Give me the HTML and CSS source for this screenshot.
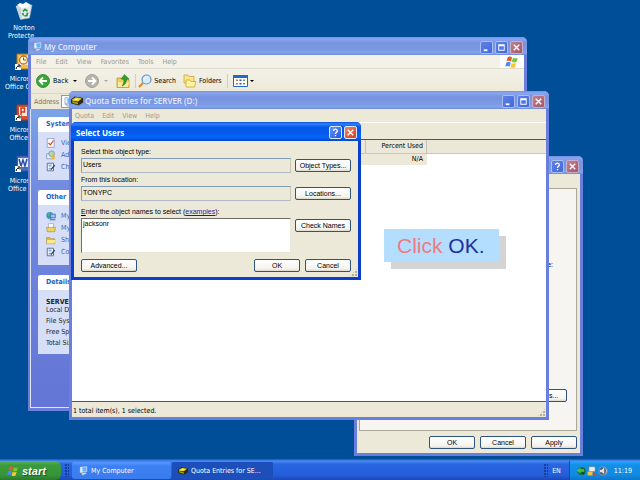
FILE: index.html
```html
<!doctype html>
<html lang="en">
<head>
  <meta charset="utf-8" />
  <meta name="viewport" content="width=device-width, initial-scale=1"/>
  <title>Disk quota demo</title>
  <link rel="stylesheet" href="styles.css">
</head>
<body>
  <svg width="0" height="0" class="defs" aria-hidden="true">
    <symbol id="flag" viewBox="0 0 16 16">
      <path fill="#f0562b" d="M3 2.500c2-1.200 3.500-1 5 0L6.800 7.300c-1.500-1-3.200-1-5 0z"/>
      <path fill="#7cc52f" d="M9 3c2 1 3.500 1 5.500 0l-1.300 4.800c-2 1-3.600 1-5.300 0z"/>
      <path fill="#4a8df0" d="M1.500 8.500c2-1 3.500-1 5 0l-1.200 4.800c-1.600-1-3.200-1-5 0z"/>
      <path fill="#fbc52c" d="M7.500 9c2 1 3.500 1 5.300 0l-1.300 4.900c-2 1-3.600 1-5.300 0z"/>
    </symbol>
    <symbol id="pc" viewBox="0 0 16 16">
      <path fill="#e9eef8" stroke="#4e74b8" stroke-width=".7" d="M3 1h5v10H3z"/>
      <path fill="#63b4f5" stroke="#e8f4ff" d="M6 2l8-1v8l-7 1z"/>
      <path fill="#d5dbe8" stroke="#56719f" stroke-width=".7" d="M4 12l8-2 2 2-6 3z"/>
    </symbol>
    <symbol id="disk" viewBox="0 0 16 16">
      <path fill="#2b2b12" d="M0 6l5-4 11 2v6l-6 4-10-3z"/>
      <path fill="#e5d533" d="M1.500 6l5-3 8 1.500-5 4L2 7.500z"/>
      <path fill="#a8a017" d="M1.500 8l8 2v2.500L2 10.500z"/>
      <path fill="#fffbc0" d="M5 5.500l3-1 2 .5-3 1.500z"/>
    </symbol>
    <symbol id="folder" viewBox="0 0 16 16">
      <path fill="#e8b83a" stroke="#a37b1c" stroke-width=".8" d="M1 4h5l1.500 2H14v8H1z"/>
      <path fill="#fde88c" d="M2 8h13l-1.500 5.500H1.500z"/>
    </symbol>
    <symbol id="panel" viewBox="0 0 16 16">
      <path fill="#fff" stroke="#44597e" stroke-width="1.300" d="M2 2h10v12H2z"/>
      <path fill="#86aee8" d="M4 4h5v3H4zM4 9h4v3H4z"/>
      <path stroke="#26406d" stroke-width="2" d="M14 5l-6 7"/>
    </symbol>
    <symbol id="shortcut" viewBox="0 0 6 6">
      <path fill="#fff" d="M0 0h6v6H0z"/>
      <path fill="none" stroke="#000" d="M1.200 5c0-2 1-2.800 3-2.800M2.800 1H5v2.500"/>
    </symbol>
    <symbol id="min" viewBox="0 0 12 12"><path fill="#fff" d="M3 8h4v2H3z"/></symbol>
    <symbol id="max" viewBox="0 0 12 12"><path fill="#fff" fill-rule="evenodd" d="M2.500 2.500h7v7h-7zM3.500 4.500v4h5v-4z"/></symbol>
    <symbol id="close" viewBox="0 0 12 12"><path stroke="#fff" stroke-width="1.500" d="M3 3l6 6M9 3l-6 6"/></symbol>
    <symbol id="help" viewBox="0 0 12 12"><path fill="none" stroke="#fff" stroke-width="1.500" d="M4 4.300c0-2.700 4-2.500 4 0 0 1.400-2 1.400-2 3.200M6 8.600v1.500"/></symbol>
  </svg>

  <main class="desktop">
    <nav class="shortcuts" aria-label="Desktop">
      <a href="#" class="shortcut">
        <svg viewBox="0 0 18 18"><path fill="#e4ebef" stroke="#9fb0ba" stroke-width=".6" d="M1 4l16-1-2.500 13-9 1.500z"/><path fill="#fff" d="M2 3l3-2 3 1 3-2 5 3-4 2.500-6 .5z"/><path fill="#c7d3da" d="M1 4l5 1.500L6.500 17l-1.500-.5z"/><path fill="none" stroke="#21983c" stroke-width="1.700" d="M8 9.500l2-2.200 2.500 1.800M12.600 10.500l-.7 3-2.500.5M8.600 13.500L7.500 11"/></svg>
        <span>Norton<br>Protecte...</span>
      </a>
      <a href="#" class="shortcut">
        <svg viewBox="0 0 18 18"><path fill="#f5bd4f" stroke="#b46f14" d="M2 1h14v15H2z"/><path fill="#fbe4a8" d="M4 3h10v9H4z"/><circle cx="8.500" cy="7" r="4" fill="#fff6dd" stroke="#b9741a" stroke-width="1.300"/><path fill="none" stroke="#8b5210" d="M8.500 4.500V7H11"/><use href="#shortcut" x="0" y="11" width="6" height="6"/></svg>
        <span>Microsoft<br>Office Out...</span>
      </a>
      <a href="#" class="shortcut">
        <svg viewBox="0 0 18 18"><path fill="#d9502f" stroke="#a33a20" d="M2 1h14v15H2z"/><path fill="#fde7de" d="M4 3h8v9H4z"/><path fill="none" stroke="#c63f22" stroke-width="1.500" d="M6 12V4h3.500v4H6"/><path stroke="#fff" d="M13 5h2M13 8h2"/><use href="#shortcut" x="0" y="11" width="6" height="6"/></svg>
        <span>Microsoft<br>Office P...</span>
      </a>
      <a href="#" class="shortcut">
        <svg viewBox="0 0 18 18"><path fill="#4b6fc8" stroke="#2f4f9f" d="M2 1h14v15H2z"/><path fill="#e6edfb" d="M3 3h10v9H3z"/><path fill="none" stroke="#2a4da5" stroke-width="1.500" d="M4 4l2 7 2-6 2 6 2-7"/><path stroke="#fff" d="M14 5h1M14 8h1"/><use href="#shortcut" x="0" y="11" width="6" height="6"/></svg>
        <span>Microsoft<br>Office W...</span>
      </a>
    </nav>

    <section class="window computer" aria-label="My Computer">
      <header class="title">
        <svg class="i10"><use href="#pc"/></svg>
        <h2>My Computer</h2>
        <button class="ctl" aria-label="Minimize"><svg><use href="#min"/></svg></button>
        <button class="ctl" aria-label="Maximize"><svg><use href="#max"/></svg></button>
        <button class="ctl close" aria-label="Close"><svg><use href="#close"/></svg></button>
      </header>
      <div class="menurow">
        <nav class="menu">
          <button>File</button><button>Edit</button><button>View</button><button>Favorites</button><button>Tools</button><button>Help</button>
        </nav>
        <div class="throbber"><svg class="i14"><use href="#flag"/></svg></div>
      </div>
      <div class="toolbar">
        <button class="tool back">
          <svg class="i14" viewBox="0 0 14 14"><circle cx="7" cy="7" r="6.500" fill="#39a735" stroke="#2a7d2a" stroke-width=".8"/><path fill="none" stroke="#fff" stroke-width="1.800" d="M11 7H4M7 3.500L3.500 7 7 10.500"/></svg>
          Back <i class="caret"></i>
        </button>
        <button class="tool forward" aria-label="Forward">
          <svg class="i14" viewBox="0 0 14 14"><circle cx="7" cy="7" r="6.500" fill="#b5b5ad" stroke="#94948d" stroke-width=".8"/><path fill="none" stroke="#fff" stroke-width="1.800" d="M3 7h7M7 3.500L10.500 7 7 10.500"/></svg>
          <i class="caret pale"></i>
        </button>
        <button class="tool up" aria-label="Up">
          <svg class="i14" viewBox="0 0 14 14"><path fill="#f3cd57" stroke="#b48c22" stroke-width=".7" d="M1 4h4l1 1.500h7v8H1z"/><path fill="#fdeb9c" d="M2 8h11l-1 5H2z"/><path fill="#33a02c" stroke="#1c7418" stroke-width=".5" d="M8.500.5L13 5h-2.500c0 3.500-1 5.500-4.500 7 1.500-2 2-4 2-7H5z"/></svg>
        </button>
        <button class="tool">
          <svg class="i14" viewBox="0 0 14 14"><path stroke="#d98b2b" stroke-width="2.200" d="M1 13l4-4"/><circle cx="8.500" cy="5.500" r="4.500" fill="#d6ecfb" stroke="#5f96cf" stroke-width="1.200"/><path fill="none" stroke="#fff" d="M6 5.500c0-1.500 1-2.500 2.500-2.500"/></svg>
          Search
        </button>
        <button class="tool folders">
          <svg class="i14" viewBox="0 0 14 14"><path fill="#fbe68a" stroke="#cda42f" stroke-width=".8" d="M1 1h4l1 1.500h5V9H1z"/><path fill="#fff3a8" stroke="#cda42f" stroke-width=".8" d="M3 6h4l1 1.500h5L11.500 13H3z"/></svg>
          Folders
        </button>
        <button class="tool views" aria-label="Views">
          <svg class="i15" viewBox="0 0 15 12"><path fill="#fff" stroke="#2568c4" d="M.5.5h14v11H.5z"/><path fill="#2568c4" d="M0 0h15v3H0z"/><path fill="#d76b4e" d="M3 4.500h2V6H3zM3 8h2v1.500H3z"/><path fill="#314fa8" d="M6.500 4.500h2V6h-2zM6.500 8h2v1.500h-2z"/><path fill="#54a154" d="M10 4.500h2V6h-2zM10 8h2v1.500h-2z"/></svg>
          <i class="caret"></i>
        </button>
      </div>
      <div class="address">
        <span>Address</span>
        <div class="addressbox"><svg class="i10"><use href="#pc"/></svg></div>
      </div>
      <div class="pane">
        <aside class="tasks">
          <section class="card">
            <h3>System Tasks</h3>
            <ul>
              <li><svg class="i10" viewBox="0 0 16 16"><path fill="#fff" stroke="#6b7fa8" d="M2 1h11v14H2z"/><path fill="none" stroke="#d0452c" stroke-width="2" d="M4 8l3 3 5-7"/></svg><a href="#">View</a></li>
              <li><svg class="i10" viewBox="0 0 16 16"><path fill="#e8edf7" stroke="#6b7fa8" d="M1 6h10v8H1z"/><circle cx="9" cy="6" r="4.500" fill="#b8d6ac" stroke="#5f7d9d"/><path fill="#e3ba45" d="M9 9h5v6H9z"/></svg><a href="#">Add</a></li>
              <li><svg class="i10"><use href="#panel"/></svg><a href="#">Change</a></li>
            </ul>
          </section>
          <section class="card">
            <h3>Other Places</h3>
            <ul>
              <li><svg class="i10" viewBox="0 0 16 16"><circle cx="6" cy="7" r="5.500" fill="#3792ce"/><path fill="#63b35b" d="M2 4l4-2 1 4-3 3z"/><path fill="#8cc6f2" stroke="#31589d" d="M7 5h8v6H7z"/><path fill="#667da6" d="M6 13h9v2H6z"/></svg><a href="#">My</a></li>
              <li><svg class="i10" viewBox="0 0 16 16"><path fill="#fff" stroke="#8d9bb5" d="M4 1h8v9H4z"/><path fill="#f2d261" stroke="#a98a2e" d="M1 7h14l-1 7H2z"/></svg><a href="#">My</a></li>
              <li><svg class="i10"><use href="#folder"/></svg><a href="#">Shared</a></li>
              <li><svg class="i10"><use href="#panel"/></svg><a href="#">Control</a></li>
            </ul>
          </section>
          <section class="card">
            <h3>Details</h3>
            <div class="details">
              <p><b>SERVER (D:)</b><br>Local Disk</p>
              <p>File System</p>
              <p>Free Space</p>
              <p>Total Size</p>
            </div>
          </section>
        </aside>
      </div>
    </section>

    <section class="window properties" aria-label="Properties">
      <header class="title">
        <h2></h2>
        <button class="ctl" aria-label="Help"><svg><use href="#help"/></svg></button>
        <button class="ctl close" aria-label="Close"><svg><use href="#close"/></svg></button>
      </header>
      <div class="sheet">
        <div class="tabpage">
          <p>for new users on this volume:</p>
          <button class="btn">Quota Entries...</button>
        </div>
        <div class="actions">
          <button class="btn">OK</button>
          <button class="btn">Cancel</button>
          <button class="btn">Apply</button>
        </div>
      </div>
    </section>

    <section class="window quota" aria-label="Quota Entries">
      <header class="title">
        <svg class="i12"><use href="#disk"/></svg>
        <h2>Quota Entries for SERVER (D:)</h2>
        <button class="ctl" aria-label="Minimize"><svg><use href="#min"/></svg></button>
        <button class="ctl" aria-label="Maximize"><svg><use href="#max"/></svg></button>
        <button class="ctl close" aria-label="Close"><svg><use href="#close"/></svg></button>
      </header>
      <nav class="menu">
        <button>Quota</button><button>Edit</button><button>View</button><button>Help</button>
      </nav>
      <div class="strip"></div>
      <div class="list">
        <table>
          <thead><tr><th class="wide"></th><th class="used">Percent Used</th><th></th></tr></thead>
          <tbody><tr><td class="sel"></td><td class="sel">N/A</td><td></td></tr></tbody>
        </table>
      </div>
      <footer class="status">1 total item(s), 1 selected.<span class="grip"></span></footer>
    </section>

    <form class="window active select" aria-label="Select Users">
      <header class="title">
        <h2>Select Users</h2>
        <button type="button" class="ctl" aria-label="Help"><svg><use href="#help"/></svg></button>
        <button type="button" class="ctl close" aria-label="Close"><svg><use href="#close"/></svg></button>
      </header>
      <div class="dialog">
        <div class="field">
          <label for="type">Select this object type:</label>
          <input id="type" type="text" value="Users" readonly>
          <button type="button" class="btn">Object Types...</button>
        </div>
        <div class="field">
          <label for="location">From this location:</label>
          <input id="location" type="text" value="TONYPC" readonly>
          <button type="button" class="btn">Locations...</button>
        </div>
        <div class="field names">
          <label for="names"><u>E</u>nter the object names to select (<a href="#">examples</a>):</label>
          <textarea id="names" spellcheck="false">jacksonr</textarea>
          <button type="button" class="btn">Check Names</button>
        </div>
        <div class="actions">
          <button type="button" class="btn advanced">Advanced...</button>
          <button type="button" class="btn">OK</button>
          <button type="button" class="btn">Cancel</button>
        </div>
        <span class="grip"></span>
      </div>
    </form>

    <div class="callout"><em>Click</em> OK.</div>
  </main>

  <footer class="taskbar">
    <button class="start"><svg class="i12"><use href="#flag"/></svg>start</button>
    <span class="dots"></span>
    <button class="task"><svg class="i10"><use href="#pc"/></svg>My Computer</button>
    <button class="task on"><svg class="i10"><use href="#disk"/></svg>Quota Entries for SE...</button>
    <span class="lang"><span class="dots"></span>EN</span>
    <div class="tray">
      <svg class="i10" viewBox="0 0 16 16"><circle cx="9" cy="8" r="6.500" fill="#1b6a3c"/><path fill="#49c04d" d="M1 7l6-5v3h6v4H7v3z"/><path fill="#0c2f4c" d="M10 10l4 1-3 3z"/></svg>
      <svg class="i10" viewBox="0 0 16 16"><path fill="#e9edf4" stroke="#65758c" d="M3 1h10v8H3z"/><path fill="#e9c647" d="M1 9h8v6H1z"/><path fill="#c64c31" d="M9 11h6v4H9z"/></svg>
      <svg class="i10" viewBox="0 0 16 16"><circle cx="8" cy="8" r="6.500" fill="#4c5664" stroke="#a8b4c2"/><path fill="#dce2e8" d="M3 6h3l4-4v11L6 10H3z"/><path fill="none" stroke="#fff" d="M12 4c2 3 2 5 0 8"/></svg>
      <time>11:19</time>
    </div>
  </footer>
</body>
</html>
```
FILE: styles.css
```css
:root{ --face:#ece9d8; --desk:#004e98; --edge:#6a7edb; --ui:"DejaVu Sans Condensed","DejaVu Sans",sans-serif; --dlg:"Liberation Sans",Arial,sans-serif; }
*,*::before,*::after{box-sizing:border-box}
body{margin:0;min-height:100vh;display:flex;flex-direction:column;background:var(--desk);font:7px/8px var(--ui);color:#000;overflow:hidden}
button,input,textarea{font:inherit;color:inherit;margin:0;padding:0;border:0;background:none;border-radius:0;outline:none}
h2,h3,p,ul{margin:0;padding:0;list-style:none}
a{color:inherit;text-decoration:none}
svg{display:block;flex:none}
.defs{position:absolute}
.i10{width:10px;height:10px}
.i12{width:12px;height:12px}
.i14{width:14px;height:14px}
.i15{width:15px;height:12px}

.desktop{flex:1;position:relative}

/* desktop icons */
.shortcuts{width:48px;padding-top:2px;display:flex;flex-direction:column;gap:13px}
.shortcut{display:flex;flex-direction:column;align-items:center;gap:4px;color:#fff;text-align:center;white-space:nowrap}
.shortcut svg{width:18px;height:18px}

/* window frame */
.window{position:absolute;display:flex;flex-direction:column;border:solid var(--edge);border-width:0 3px 3px;border-radius:5px 5px 0 0;background:var(--face)}
.title{height:18px;margin:0 -3px;padding:2px 4px 0 5px;display:flex;align-items:center;gap:2px;border-radius:5px 5px 0 0;background:linear-gradient(#6f8fe8,#8aa6ee 2px,#7893df 6px,#7b9ae4 13px,#83a4ea 16px,#7089da);color:#e4ebfc}
.title h2{flex:1;font:600 8px/10px "Open Sans",sans-serif;white-space:nowrap}
.ctl{width:13px;height:13px;border:1px solid #a9bcf3;border-radius:2px;background:linear-gradient(135deg,#5d82e8,#4468dc)}
.ctl svg{width:11px;height:11px}
.ctl.close{background:linear-gradient(135deg,#c0828f,#a5566a);border-color:#c9aecb}
.active{border-color:#0a3fcb}
.active .title{background:linear-gradient(#0a4fd6,#2f83ff 2px,#0458e6 5px,#0458ea 10px,#0566fb 15px,#0348c8);color:#fff}
.active .title h2{font-weight:bold}
.active .ctl{border-color:#dfe8fb;background:linear-gradient(135deg,#6593f5,#2357dc)}
.active .ctl.close{background:linear-gradient(135deg,#ec8a6b,#cf3f1c)}

.menu{display:flex;gap:9px;padding-left:5px;align-items:center}
.menu button{color:#9c9a8e}
.btn{height:13px;border:1px solid #2f547f;border-radius:2px;background:linear-gradient(#fff,#f4f3ee 80%,#dcd8cc);font:7px/9px var(--dlg);text-align:center;white-space:nowrap}
.caret{border:2px solid transparent;border-top-color:#000;border-bottom:0}
.caret.pale{border-top-color:#aaa89c}
.grip{width:9px;height:9px;background:radial-gradient(circle at 1px 1px,#b2ae9c 1px,transparent 1px) 0 0/3px 3px;clip-path:polygon(100% 0,100% 100%,0 100%)}

/* My Computer */
.computer{left:28px;top:37px;width:499px;height:374px}
.computer .title{padding-left:4px}
.menurow{display:flex;height:14px;background:#f3f1e8;border-bottom:1px solid #dedbcd}
.menurow .menu{flex:1}
.throbber{width:24px;background:#fff;display:flex;align-items:center;justify-content:center}
.toolbar{display:flex;align-items:center;height:25px;padding-left:5px;background:linear-gradient(#f3f1e8,#ece9d8);border-bottom:1px solid #dcd8c8}
.tool{display:flex;align-items:center;gap:2px}
.back{gap:3px;margin-right:8px}
.back .caret{margin-left:2px}
.forward{gap:5px;margin-right:8px}
.up{margin-right:2px;padding-right:5px;border-right:1px solid #d2cfc0}
.folders{margin:0 5px 0 7px;padding-right:5px;border-right:1px solid #d2cfc0}
.address{display:flex;align-items:center;height:15px;padding-left:3px;gap:2px;color:#77756b}
.addressbox{flex:1;margin-right:60px;height:13px;border:1px solid #7f9db9;background:#fff;display:flex;align-items:center;padding-left:1px}
.pane{flex:1;display:flex;border:solid #dfe5fb;border-width:0 0 1px 1px;margin-left:-1px;background:#fff}
.tasks{width:130px;padding:8px 7px 0;display:flex;flex-direction:column;gap:10px;background:linear-gradient(#7ba2e7,#7189de 30%,#6375d6)}
.card{background:#d6dff7;border-radius:3px 3px 0 0;color:#3c64b8}
.card h3{height:15px;padding-left:8px;border-radius:3px 3px 0 0;background:linear-gradient(90deg,#fff 30%,#c6d3f7);font:bold 7px/15px var(--ui);color:#215dc6}
.card ul{padding:5px 8px 7px}
.card li{display:flex;align-items:center;gap:5px;height:12px}
.details{display:flex;flex-direction:column;gap:3px;padding:8px 8px 7px;color:#222}

/* disk properties, mostly behind the quota list */
.properties{left:354px;top:156px;width:229px;height:300px}
.sheet{flex:1;display:flex;flex-direction:column;padding:14px 3px 4px 2px}
.tabpage{flex:1;display:flex;flex-direction:column;justify-content:space-between;align-items:flex-end;border:1px solid #aaa797;background:#f6f5f2;padding:72px 9px 28px}
.tabpage p{margin-right:14px;font:7px/8px var(--dlg)}
.tabpage .btn{width:66px}
.actions{display:flex;justify-content:flex-end;gap:5px}
.actions .btn{width:46px}
.sheet .actions{margin-top:5px}

/* quota entries */
.quota{left:69px;top:91px;width:480px;height:329px}
.quota .title{padding-left:2px}
.quota .menu{height:13px;padding-left:3px;gap:8px}
.strip{height:17px;border-top:1px solid #fff}
.list{flex:1;background:#fff;border-top:1px solid #55554d;border-bottom:1px solid #55554d}
table{width:100%;border-collapse:collapse;table-layout:fixed;text-align:right}
th,td{padding:0 4px;height:12px;font-weight:normal}
th{height:13px;background:#ebe8d9;border-bottom:1px solid #cbc7b8}
.wide{width:293px}
.used{width:62px;box-shadow:inset 1px 0 #c5c2b2,inset -1px 0 #c5c2b2}
.sel{background:#ece9d8}
.status{display:flex;height:15px;padding:2px 0 0 1px;justify-content:space-between;align-items:center}
.status .grip{align-self:flex-end}

/* select users */
.select{left:71px;top:122px;width:290px;height:158px;font-family:var(--dlg)}
.select .title{height:19px}
.dialog{flex:1;position:relative;padding:6px 7px 0;display:flex;flex-direction:column}
.field{display:grid;grid-template-columns:1fr 56px;column-gap:4px;row-gap:1px;margin-bottom:2px}
.field label{grid-column:1/3;line-height:10px}
.field label a{color:#1c1ca8;text-decoration:underline}
.field input,.field textarea{min-width:0;height:15px;padding:0 1px 2px;border:1px solid #9a9a90;background:var(--face);border-color:#7f9db9 #c9c6b8 #aebbc6 #7f9db9}
.field textarea{display:block;height:35px;padding-top:1px;background:#fff;border-color:#6d6d66 #e8e6da #e8e6da #6d6d66;resize:none;overflow:hidden}
.field .btn{margin-top:1px}
.names{margin:4px 0 6px}
.select .advanced{width:56px;margin-right:auto}
.dialog .grip{position:absolute;right:0;bottom:0}

.callout{position:absolute;left:384px;top:229px;padding:5px 14px 4px 13px;background:#b3deff;box-shadow:7px 7px #d5d4d5;font:21px/24px var(--dlg);color:#22309a;white-space:nowrap}
.callout em{font-style:normal;color:#f07a80}

/* taskbar */
.taskbar{position:relative;display:flex;align-items:stretch;height:21px;padding-top:2px;background:linear-gradient(#1c4fb8,#4a8cf5 2px,#2a66e0 5px,#245edb 16px,#1c48b4);color:#fff}
.start{width:61px;display:flex;align-items:center;gap:3px;padding-left:7px;border-radius:0 6px 6px 0;background:linear-gradient(#5eb35c,#3c9a3c 4px,#36953a 14px,#2a7a2c);font:italic bold 11px/14px var(--dlg);color:#fff;text-shadow:1px 1px 1px #1d4d1d}
.dots{width:4px;margin:3px 4px;background:radial-gradient(circle at 1px 1px,#173d9d 1px,transparent 1px) 0 0/3px 3px}
.task{width:99px;margin:1px 1px 1px 0;display:flex;align-items:center;gap:3px;padding-left:6px;border-radius:2px;background:linear-gradient(#5b9bff,#3c81f3 4px,#3a7cee);white-space:nowrap;overflow:hidden}
.start + .dots{margin-right:3px}
.task.on{width:101px;background:#1d4fbb}
.lang{margin-left:auto;display:flex;align-items:center;padding-right:8px}
.lang .dots{align-self:stretch}
.tray{display:flex;align-items:center;gap:1px;padding:0 8px 0 6px;background:linear-gradient(#2ba8f5,#1290e8 4px,#118ae2 14px,#0d76c9);border-left:1px solid #0c4fae}
.tray time{margin-left:5px}
```
